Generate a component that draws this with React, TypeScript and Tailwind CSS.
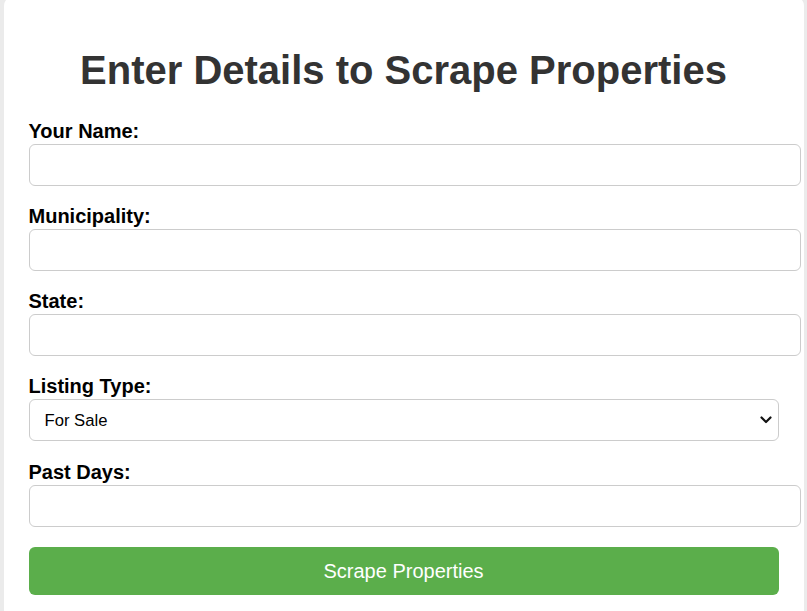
import React from "react";

const fields = [
  { label: "Your Name:" },
  { label: "Municipality:" },
  { label: "State:" },
];

function Label({ children }: { children: React.ReactNode }) {
  return (
    <label className="block pt-[1px] text-[20px] leading-[23px] font-bold text-black">
      {children}
    </label>
  );
}

function TextInput() {
  return (
    <input
      type="text"
      className="mt-[1px] block box-content w-full h-[20px] px-[10px] py-[10px] border border-[#cccccc] rounded-[6px] bg-white text-[16.67px] outline-none"
    />
  );
}

export default function App() {
  return (
    <div
      className="min-h-[611px] bg-[#ebebeb] overflow-hidden"
      style={{ fontFamily: '"Liberation Sans", Arial, sans-serif' }}
    >
      <div className="mx-auto w-[800px] -mt-[4px] bg-white rounded-[10px] px-[25px] pt-[51px] pb-[25px]">
        <h1 className="text-center text-[40px] leading-[46px] font-bold text-[#333333]">
          Enter Details to Scrape Properties
        </h1>
        <div className="mt-[26px]">
          {fields.map((f) => (
            <div key={f.label} className="mb-[18px]">
              <Label>{f.label}</Label>
              <TextInput />
            </div>
          ))}
          <div className="mb-[18px]">
            <Label>Listing Type:</Label>
            <div className="relative mt-[1px] w-full">
              <select
                defaultValue="sale"
                className="block w-full h-[42px] appearance-none pl-[15px] pr-[30px] border border-[#cccccc] rounded-[6px] bg-white text-[16.67px] text-black outline-none"
              >
                <option value="sale">For Sale</option>
                <option value="rent">For Rent</option>
                <option value="sold">Sold</option>
              </select>
              <svg
                className="pointer-events-none absolute right-[6px] top-[15px]"
                width="14"
                height="12"
                viewBox="0 0 14 12"
              >
                <path
                  d="M2.5 3.5 L7 8 L11.5 3.5"
                  fill="none"
                  stroke="#111"
                  strokeWidth="2.2"
                  strokeLinecap="round"
                  strokeLinejoin="round"
                />
              </svg>
            </div>
          </div>
          <div className="pt-[1px]">
            <Label>Past Days:</Label>
            <TextInput />
          </div>
          <button
            type="button"
            className="mt-[20px] block w-full h-[48px] rounded-[6px] bg-[#5bae4b] text-white text-[20px]"
          >
            Scrape Properties
          </button>
        </div>
      </div>
    </div>
  );
}
